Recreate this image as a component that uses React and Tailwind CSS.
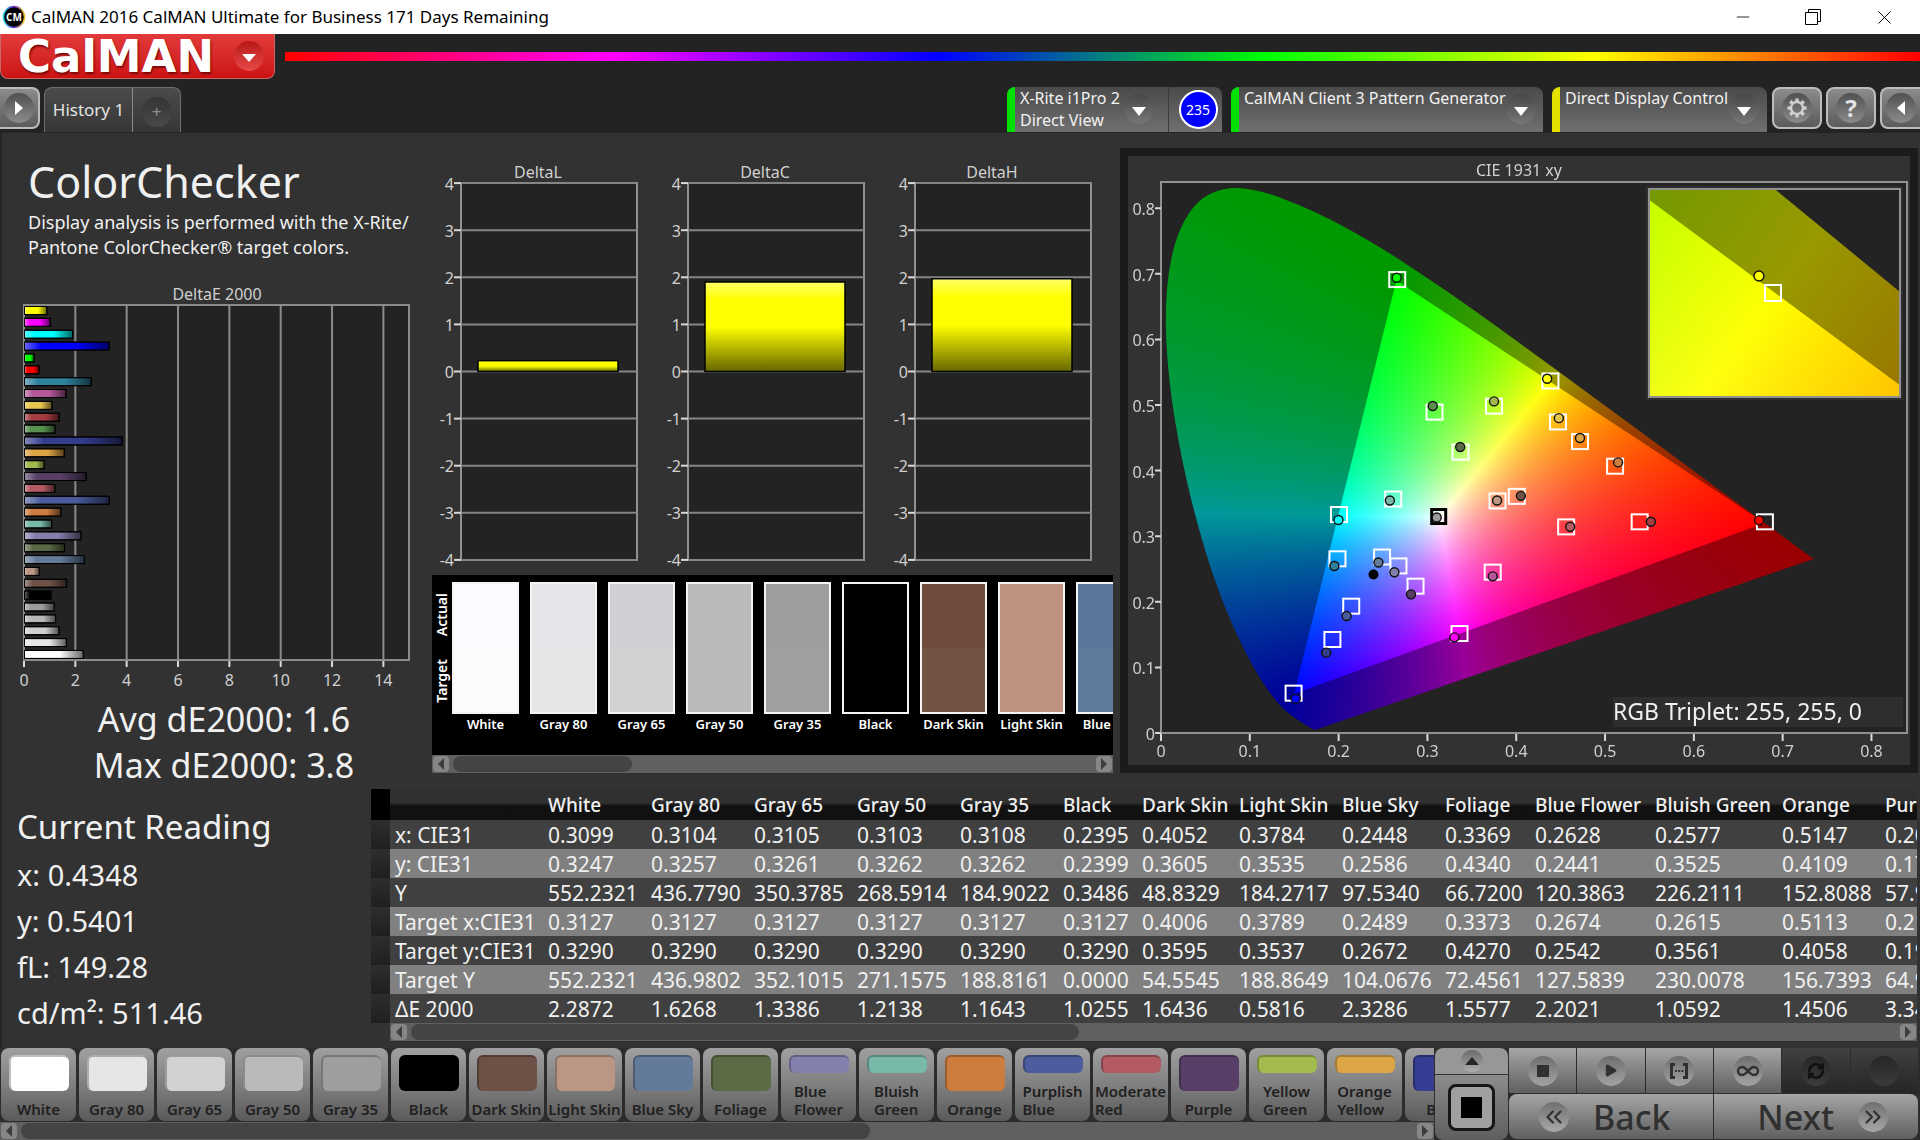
import React, { useEffect, useRef } from 'react';
import {
  ChevronsLeft,
  ChevronsRight,
  Infinity as InfinityIcon,
  Minus,
  Play,
  RefreshCw,
  X,
} from 'lucide-react';

const patches = [
  { name: 'White', color: '#ffffff', actual: '#fbfcff', target: '#fcfcfc' },
  { name: 'Gray 80', color: '#e6e6e6', actual: '#e4e5e9', target: '#e5e5e5' },
  { name: 'Gray 65', color: '#d2d2d2', actual: '#d0cfd3', target: '#d1d1d1' },
  { name: 'Gray 50', color: '#bababa', actual: '#b9babb', target: '#bababa' },
  { name: 'Gray 35', color: '#9e9e9e', actual: '#9d9d9e', target: '#9f9f9f' },
  { name: 'Black', color: '#000000', actual: '#000103', target: '#000000' },
  { name: 'Dark Skin', color: '#6e5146', actual: '#704c3f', target: '#735344' },
  { name: 'Light Skin', color: '#ba9785', actual: '#bf9280', target: '#c0937f' },
  { name: 'Blue Sky', color: '#637a99', actual: '#5a779c', target: '#5d7b9c' },
  { name: 'Foliage', color: '#5b6b45' },
  { name: 'Blue Flower', color: '#8380ad', lines: ['Blue', 'Flower'] },
  { name: 'Bluish Green', color: '#79b9a9', lines: ['Bluish', 'Green'] },
  { name: 'Orange', color: '#cc7c3d' },
  { name: 'Purplish Blue', color: '#4d5c9e', lines: ['Purplish', 'Blue'] },
  { name: 'Moderate Red', color: '#b35a63', lines: ['Moderate', 'Red'] },
  { name: 'Purple', color: '#583f68' },
  { name: 'Yellow Green', color: '#a3ba4e', lines: ['Yellow', 'Green'] },
  { name: 'Orange Yellow', color: '#dda545', lines: ['Orange', 'Yellow'] },
  { name: 'Blue', color: '#363d92' },
];

const deltaE = [
  [0.87, '#ffff00'], [1.0, '#ff00ff'], [1.87, '#00ffff'], [3.3, '#0000ff'], [0.37, '#00ff00'],
  [0.57, '#ff0000'], [2.6, '#2e829e'], [1.62, '#b4589a'], [1.07, '#e6c74d'], [1.35, '#a53c40'],
  [1.19, '#58914f'], [3.8, '#343c8c'], [1.55, '#dca345'], [0.77, '#a2b94f'], [2.4, '#573f66'],
  [1.18, '#b45a64'], [3.3, '#4a5c9c'], [1.42, '#cd7d40'], [1.06, '#78b8a8'], [2.2, '#827fab'],
  [1.56, '#5a6a45'], [2.33, '#637a98'], [0.58, '#bd9886'], [1.64, '#6e5147'], [1.03, '#000000'],
  [1.16, '#9c9c9c'], [1.21, '#b8b8b8'], [1.34, '#d0d0d0'], [1.63, '#e6e6e6'], [2.29, '#ffffff'],
];

const columns = [
  'White', 'Gray 80', 'Gray 65', 'Gray 50', 'Gray 35', 'Black', 'Dark Skin', 'Light Skin',
  'Blue Sky', 'Foliage', 'Blue Flower', 'Bluish Green', 'Orange', 'Purplish Blue',
];

const columnWidths = [
  'w-[19px]', 'w-[153px]', 'w-[103px]', 'w-[103px]', 'w-[103px]', 'w-[103px]', 'w-[103px]', 'w-[79px]',
  'w-[97px]', 'w-[103px]', 'w-[103px]', 'w-[90px]', 'w-[120px]', 'w-[127px]', 'w-[103px]', 'w-[140px]',
];

const rows = [
  ['x: CIE31', '0.3099', '0.3104', '0.3105', '0.3103', '0.3108', '0.2395', '0.4052', '0.3784', '0.2448', '0.3369', '0.2628', '0.2577', '0.5147', '0.2090'],
  ['y: CIE31', '0.3247', '0.3257', '0.3261', '0.3262', '0.3262', '0.2399', '0.3605', '0.3535', '0.2586', '0.4340', '0.2441', '0.3525', '0.4109', '0.1776'],
  ['Y', '552.2321', '436.7790', '350.3785', '268.5914', '184.9022', '0.3486', '48.8329', '184.2717', '97.5340', '66.7200', '120.3863', '226.2111', '152.8088', '57.9204'],
  ['Target x:CIE31', '0.3127', '0.3127', '0.3127', '0.3127', '0.3127', '0.3127', '0.4006', '0.3789', '0.2489', '0.3373', '0.2674', '0.2615', '0.5113', '0.2142'],
  ['Target y:CIE31', '0.3290', '0.3290', '0.3290', '0.3290', '0.3290', '0.3290', '0.3595', '0.3537', '0.2672', '0.4270', '0.2542', '0.3561', '0.4058', '0.1941'],
  ['Target Y', '552.2321', '436.9802', '352.1015', '271.1575', '188.8161', '0.0000', '54.5545', '188.8649', '104.0676', '72.4561', '127.5839', '230.0078', '156.7393', '64.9310'],
  ['ΔE 2000', '2.2872', '1.6268', '1.3386', '1.2138', '1.1643', '1.0255', '1.6436', '0.5816', '2.3286', '1.5577', '2.2021', '1.0592', '1.4506', '3.3402'],
];

// target x, target y, measured x, measured y, measured colour
const ciePoints = [
  [0.266, 0.692, 0.2654, 0.694, '#00ff00'],
  [0.308, 0.49, 0.306, 0.4985, '#58914f'],
  [0.375, 0.499, 0.375, 0.5055, '#a2b94f'],
  [0.3373, 0.429, 0.3369, 0.436, '#5a6a45'],
  [0.4385, 0.5375, 0.4348, 0.5401, '#ffff00'],
  [0.447, 0.475, 0.448, 0.48, '#e6c74d'],
  [0.4718, 0.445, 0.4718, 0.4497, '#dca345'],
  [0.5113, 0.4075, 0.5147, 0.4125, '#cd7d40'],
  [0.2615, 0.3575, 0.2577, 0.3545, '#78b8a8'],
  [0.2004, 0.3338, 0.1998, 0.3247, '#00ffff'],
  [0.3789, 0.3545, 0.3784, 0.3545, '#bd9886'],
  [0.4006, 0.3615, 0.4052, 0.3615, '#6e5147'],
  [0.4562, 0.315, 0.4608, 0.3145, '#b45a64'],
  [0.539, 0.3227, 0.5516, 0.3221, '#a53c40'],
  [0.68, 0.3227, 0.6735, 0.3242, '#ff0000'],
  [0.1987, 0.2663, 0.1952, 0.2546, '#2e829e'],
  [0.2489, 0.269, 0.2448, 0.26, '#637a98'],
  [0.2674, 0.2555, 0.2628, 0.245, '#827fab'],
  [0.2866, 0.2246, 0.2815, 0.2114, '#573f66'],
  [0.3735, 0.246, 0.3735, 0.2388, '#b4589a'],
  [0.2142, 0.1941, 0.209, 0.1783, '#4a5c9c'],
  [0.193, 0.1433, 0.186, 0.1225, '#343c8c'],
  [0.3361, 0.1524, 0.3304, 0.1458, '#ff00ff'],
  [0.1493, 0.0615, 0.1516, 0.0523, '#0000ff'],
];

const locus = [
  [0.1741, 0.005], [0.1714, 0.0051], [0.1644, 0.0109], [0.1566, 0.0177], [0.144, 0.0297],
  [0.1355, 0.0399], [0.1241, 0.0578], [0.1096, 0.0868], [0.0913, 0.1327], [0.0687, 0.2007],
  [0.0454, 0.295], [0.0235, 0.4127], [0.0082, 0.5384], [0.0039, 0.6548], [0.0139, 0.7502],
  [0.0389, 0.812], [0.0743, 0.8338], [0.1142, 0.8262], [0.1547, 0.8059], [0.1929, 0.7816],
  [0.2296, 0.7543], [0.2658, 0.7243], [0.3016, 0.6923], [0.3373, 0.6589], [0.3731, 0.6245],
  [0.4441, 0.5547], [0.5125, 0.4866], [0.5752, 0.4242], [0.627, 0.3725], [0.6658, 0.334],
  [0.6915, 0.3083], [0.719, 0.2809], [0.7347, 0.2653],
];

const gamut = [[0.68, 0.32], [0.265, 0.69], [0.15, 0.06]];

// Plot areas inside the 782 x 609 chart
const mainPlot = { left: 33, top: 26, width: 746, height: 551, x0: 0, y0: 0, span: 0.84 };
const zoomPlot = { left: 521, top: 33, width: 251, height: 208, x0: 0.4126, y0: 0.511, span: 0.05 };

const toPx = (plot, x, y) => [
  plot.left + ((x - plot.x0) / plot.span) * plot.width,
  plot.top + plot.height - ((y - plot.y0) / plot.span) * plot.height,
];

// Chromaticity to display RGB, scaled so the largest channel is full
const chromaToRgb = (x, y) => {
  const X = x / Math.max(y, 0.001);
  const Z = (1 - x - y) / Math.max(y, 0.001);
  const rgb = [
    2.4935 * X - 0.9314 - 0.4027 * Z,
    -0.8295 * X + 1.7627 + 0.0236 * Z,
    0.0358 * X - 0.0762 + 0.9569 * Z,
  ].map((v) => Math.max(v, 0));
  const max = Math.max(...rgb, 0.0001);
  return rgb.map((v) => (v / max) * 255);
};

const drawPlot = (ctx, plot) => {
  const { left, top, width, height } = plot;
  const layer = (gain) => {
    const canvas = document.createElement('canvas');
    canvas.width = width;
    canvas.height = height;
    const layerCtx = canvas.getContext('2d');
    const image = layerCtx.createImageData(width, height);
    for (let j = 0; j < height; j++) {
      for (let i = 0; i < width; i++) {
        const x = plot.x0 + (i / width) * plot.span;
        const y = plot.y0 + ((height - j) / height) * plot.span;
        const [r, g, b] = chromaToRgb(x, y);
        const k = (j * width + i) * 4;
        image.data[k] = r * gain;
        image.data[k + 1] = g * gain;
        image.data[k + 2] = b * gain;
        image.data[k + 3] = 255;
      }
    }
    layerCtx.putImageData(image, 0, 0);
    return canvas;
  };

  ctx.save();
  ctx.beginPath();
  ctx.rect(left, top, width, height);
  ctx.clip();
  ctx.fillStyle = '#232323';
  ctx.fillRect(left, top, width, height);

  const pts = locus.map(([x, y]) => toPx(plot, x, y));
  ctx.beginPath();
  ctx.moveTo(...pts[0]);
  for (let i = 1; i < pts.length - 1; i++) {
    const [ax, ay] = pts[i];
    const [bx, by] = pts[i + 1];
    ctx.quadraticCurveTo(ax, ay, (ax + bx) / 2, (ay + by) / 2);
  }
  ctx.lineTo(...pts[pts.length - 1]);
  ctx.closePath();
  ctx.clip();
  ctx.drawImage(layer(0.6), left, top);

  ctx.beginPath();
  gamut.forEach(([x, y]) => ctx.lineTo(...toPx(plot, x, y)));
  ctx.closePath();
  ctx.clip();
  ctx.drawImage(layer(1), left, top);
  ctx.restore();
};

const CieChart = () => {
  const canvasRef = useRef(null);

  useEffect(() => {
    const ctx = canvasRef.current.getContext('2d');
    drawPlot(ctx, mainPlot);
    ctx.fillStyle = '#2e2e2e';
    ctx.fillRect(518, 30, 257, 214);
    drawPlot(ctx, zoomPlot);
  }, []);

  const ticks = [0, 0.1, 0.2, 0.3, 0.4, 0.5, 0.6, 0.7, 0.8];
  const [wx, wy] = toPx(mainPlot, 0.3127, 0.33);
  const [tx, ty] = toPx(zoomPlot, 0.4373, 0.536);
  const [ax, ay] = toPx(zoomPlot, 0.4345, 0.5401);

  return (
    <div className="relative bg-[#323232]">
      <canvas ref={canvasRef} width={782} height={609} className="block w-full" />
      <svg viewBox="0 0 782 609" className="absolute inset-0 h-full w-full" role="img" aria-label="CIE 1931 xy chart">
        <text x="391" y="20" fontSize="16" textAnchor="middle" fill="#d0d0d0">CIE 1931 xy</text>
        <rect x="33" y="26" width="746" height="551" fill="none" stroke="#919191" strokeWidth="2" />
        {ticks.map((t) => {
          const [px] = toPx(mainPlot, t, 0);
          const [, py] = toPx(mainPlot, 0, t);
          return (
            <g key={t} fill="#d0d0d0" fontSize="16">
              <path d={`M${px} 578v7M27 ${py}h6`} stroke="#d8d8d8" strokeWidth="2" />
              <text x={px} y="601" textAnchor="middle">{t}</text>
              <text x="27" y={py + 7} textAnchor="end">{t}</text>
            </g>
          );
        })}
        {ciePoints.map(([x, y]) => {
          const [px, py] = toPx(mainPlot, x, y);
          return <rect key={`${x}-${y}`} x={px - 8} y={py - 7} width="16" height="15" fill="none" stroke="#fff" strokeWidth="2" />;
        })}
        {ciePoints.map(([, , x, y, color]) => {
          const [px, py] = toPx(mainPlot, x, y);
          return <circle key={color} cx={px} cy={py} r="4.5" fill={color} stroke="#111" strokeWidth="1.4" />;
        })}
        <circle cx="245.5" cy="418.5" r="5" fill="#000" />
        <rect x={wx - 7} y={wy - 7} width="14" height="14" fill="none" stroke="#000" strokeWidth="3" />
        <circle cx={wx - 2} cy={wy + 1} r="4.5" fill="#9c9c9c" stroke="#111" strokeWidth="1.4" />

        <rect x="521" y="33" width="251" height="208" fill="none" stroke="#919191" strokeWidth="2" />
        <rect x={tx - 8} y={ty - 8} width="16" height="16" fill="none" stroke="#fff" strokeWidth="2" />
        <circle cx={ax} cy={ay} r="5" fill="#ffff00" stroke="#111" strokeWidth="1.4" />
        <rect x="485" y="541" width="290" height="30" fill="#2e2e2e" />
        <text x="485" y="564" fontSize="23" fill="#f0f0f0">RGB Triplet: 255, 255, 0</text>
      </svg>
    </div>
  );
};

const DeltaEChart = () => (
  <svg viewBox="0 0 400 417" className="block w-full" role="img" aria-label="DeltaE 2000 chart">
    <defs>
      <linearGradient id="sheen">
        <stop offset="0" stopColor="#fff" stopOpacity="0.4" />
        <stop offset="0.2" stopColor="#fff" stopOpacity="0" />
        <stop offset="0.6" stopColor="#000" stopOpacity="0" />
        <stop offset="1" stopColor="#000" stopOpacity="0.6" />
      </linearGradient>
    </defs>
    <text x="201" y="21" fontSize="16" textAnchor="middle" fill="#d0d0d0">DeltaE 2000</text>
    <rect x="8" y="26" width="385" height="355" fill="#232323" stroke="#8b8b8b" strokeWidth="2" />
    {[0, 2, 4, 6, 8, 10, 12, 14].map((t) => (
      <g key={t}>
        <path d={`M${8 + t * 25.67} 26v355`} stroke="#8b8b8b" strokeWidth="2" />
        <path d={`M${8 + t * 25.67} 382v6`} stroke="#d8d8d8" strokeWidth="2" />
        <text x={8 + t * 25.67} y="407" fontSize="16" textAnchor="middle" fill="#d0d0d0">{t}</text>
      </g>
    ))}
    {deltaE.map(([value, color], i) => (
      <g key={color} stroke="#000" strokeWidth="1">
        <rect x="8.5" y={27.5 + i * 11.86} width={value * 25.67} height="8" fill={color} />
        <rect x="8.5" y={27.5 + i * 11.86} width={value * 25.67} height="8" fill="url(#sheen)" />
      </g>
    ))}
  </svg>
);

const DeltaChart = ({ title, value }) => (
  <svg viewBox="0 0 227 418" className="block w-full" role="img" aria-label={`${title} chart`}>
    <defs>
      <linearGradient id="yellow-bar" x1="0" y1="0" x2="0" y2="1">
        <stop offset="0" stopColor="#ffff66" />
        <stop offset="0.2" stopColor="#ffff00" />
        <stop offset="0.5" stopColor="#ffff00" />
        <stop offset="1" stopColor="#666600" />
      </linearGradient>
    </defs>
    <text x="106" y="21" fontSize="16" textAnchor="middle" fill="#d0d0d0">{title}</text>
    <rect x="29" y="26" width="176" height="377" fill="#232323" stroke="#919191" strokeWidth="2" />
    {[4, 3, 2, 1, 0, -1, -2, -3, -4].map((t) => (
      <g key={t}>
        <path d={`M29 ${214.5 - t * 47.1}h176`} stroke="#858585" strokeWidth="2" />
        <path d={`M22 ${214.5 - t * 47.1}h7`} stroke="#d8d8d8" strokeWidth="2" />
        <text x="22" y={221 - t * 47.1} fontSize="16" textAnchor="end" fill="#d0d0d0">{t}</text>
      </g>
    ))}
    <rect x="46" y={214.5 - value * 47.1} width="140" height={value * 47.1} fill="url(#yellow-bar)" stroke="#000" strokeWidth="1.5" />
  </svg>
);

const ScrollBar = ({ label, thumbClass }) => (
  <div className="flex h-[18px] items-center gap-1 bg-[#606060] px-px" role="group" aria-label={label}>
    <button aria-label="Scroll left" className="flex h-4 w-4 items-center justify-center rounded-sm bg-[#868686]">
      <svg viewBox="0 0 8 12" className="h-3 w-2"><path d="M7 0v12L1 6z" fill="#3c3c3c" /></svg>
    </button>
    <div className="h-4 flex-1">
      <div className={`h-4 rounded-lg bg-[#444444] ${thumbClass}`} />
    </div>
    <button aria-label="Scroll right" className="flex h-4 w-4 items-center justify-center rounded-sm bg-[#868686]">
      <svg viewBox="0 0 8 12" className="h-3 w-2"><path d="M1 0v12l6-6z" fill="#3c3c3c" /></svg>
    </button>
  </div>
);

const DropCircle = () => (
  <span className="flex h-[30px] w-[30px] shrink-0 items-center justify-center rounded-full bg-linear-to-b from-[#484848] to-[#777777]">
    <svg viewBox="0 0 14 9" className="mt-1 h-[9px] w-[14px]"><path d="M0 0h14L7 9z" fill="#fff" /></svg>
  </span>
);

const SourceTab = ({ lines, strip, widthClass, dropClass, children }) => (
  <div className={`flex h-[45px] overflow-hidden rounded-t-lg bg-linear-to-b from-[#4a4a4a] to-[#707070] ${widthClass}`}>
    <button className="flex flex-1 text-left">
      <span className={`h-full w-2 shrink-0 ${strip}`} />
      <span className="flex-1 pl-[5px] text-[16px] leading-[22px] whitespace-nowrap text-[#f2f2f2]">
        {lines.map((line) => (
          <span key={line} className="block">{line}</span>
        ))}
      </span>
      <span className={`mt-[7px] ${dropClass}`}><DropCircle /></span>
    </button>
    {children}
  </div>
);

const ToolButton = ({ label, className, children }) => (
  <button aria-label={label} className={`flex h-[42px] items-center justify-center border-2 border-[#bcbcbc] bg-linear-to-b from-[#8c8c8c] to-[#5c5c5c] ${className}`}>
    <span className="flex h-[30px] w-[30px] items-center justify-center rounded-full bg-linear-to-b from-[#505050] to-[#8c8c8c]">
      {children}
    </span>
  </button>
);

const GearIcon = () => (
  <svg viewBox="0 0 24 24" className="h-6 w-6" fill="none" stroke="#d0d0d0">
    <circle cx="12" cy="12" r="6" strokeWidth="2.4" />
    {[0, 45, 90, 135, 180, 225, 270, 315].map((a) => (
      <path key={a} d="M12 2.5v3" strokeWidth="3.4" transform={`rotate(${a} 12 12)`} />
    ))}
  </svg>
);

const TitleBar = () => (
  <div className="flex h-[34px] items-center bg-white text-black">
    <svg viewBox="0 0 24 24" className="ml-[2px] h-6 w-6" aria-hidden="true">
      <defs>
        <linearGradient id="ring">
          <stop offset="0" stopColor="#18d0d8" />
          <stop offset="0.5" stopColor="#7030e0" />
          <stop offset="1" stopColor="#e8c020" />
        </linearGradient>
      </defs>
      <circle cx="12" cy="12" r="10.5" fill="#000" stroke="url(#ring)" strokeWidth="1.5" />
      <text x="12" y="16" fontSize="10" fontWeight="700" textAnchor="middle" fill="#fff">CM</text>
    </svg>
    <h1 className="ml-[5px] flex-1 text-[17px]">CalMAN 2016 CalMAN Ultimate for Business 171 Days Remaining</h1>
    <button aria-label="Minimize" className="flex h-full w-[70px] items-center justify-center"><Minus size={20} strokeWidth={1} /></button>
    <button aria-label="Restore" className="flex h-full w-[70px] items-center justify-center">
      <svg viewBox="0 0 16 16" className="h-4 w-4" fill="none" stroke="#000"><path d="M.5 3.500h12v12H.5zM3.500 3.500v-3h12v12h-3" /></svg>
    </button>
    <button aria-label="Close" className="flex h-full w-[72px] items-center justify-center"><X size={23} strokeWidth={1} /></button>
  </div>
);

const Header = () => (
  <header className="bg-[#232323]">
    <div className="flex gap-[10px]">
      <button className="flex h-[45px] w-[275px] items-center justify-between rounded-b-lg border border-t-0 border-[#c46a6a] bg-linear-to-b from-[#e23a3a] to-[#cc1111] pr-[10px] pl-[17px]">
        <span className="font-['DejaVu_Sans'] text-[45px] leading-none font-bold text-white [text-shadow:1px_2px_2px_#7a0808]">CalMAN</span>
        <span className="flex h-[30px] w-[30px] items-center justify-center rounded-full bg-linear-to-b from-[#b81616] to-[#e84848]">
          <svg viewBox="0 0 14 8" className="mt-1 h-2 w-[14px]"><path d="M0 0h14L7 8z" fill="#fff" /></svg>
        </span>
      </button>
      <div className="mt-[18px] h-[9px] flex-1 bg-[linear-gradient(90deg,#ff0000_0%,#ff00ff_20%,#0000ff_40%,#00ff00_60%,#ffff00_80%,#ff0000_100%)]" />
    </div>
    <div className="flex justify-between pt-2">
      <div className="flex gap-1">
        <ToolButton label="Expand panel" className="w-10 rounded-r-lg border-l-0">
          <svg viewBox="0 0 8 14" className="h-[14px] w-2"><path d="M0 0v14l8-7z" fill="#fff" /></svg>
        </ToolButton>
        <div className="flex h-[45px] w-[137px] overflow-hidden rounded-t-lg border border-b-0 border-[#6e6e6e] bg-linear-to-b from-[#4b4b4b] to-[#363636]">
          <button className="w-[88px] border-r border-[#8a8a8a] text-[17px] text-[#e4e4e4]">History 1</button>
          <button aria-label="Add tab" className="flex flex-1 items-center justify-center pt-1">
            <span className="flex h-[30px] w-[30px] items-center justify-center rounded-full bg-linear-to-b from-[#343434] to-[#4a4a4a] text-[17px] text-[#8e8e8e]">+</span>
          </button>
        </div>
      </div>
      <div className="flex">
        <SourceTab lines={['X-Rite i1Pro 2', 'Direct View']} strip="bg-[#00e000]" widthClass="mr-[9px] w-[215px]" dropClass="mr-[14px]">
          <div className="flex w-[54px] items-center justify-center border-l border-[#3a3a3a] pl-[5px]">
            <span className="flex h-[39px] w-[39px] items-center justify-center rounded-full border-2 border-white bg-[#0000ff] text-[14px] text-white">235</span>
          </div>
        </SourceTab>
        <SourceTab lines={['CalMAN Client 3 Pattern Generator']} strip="bg-[#00e000]" widthClass="mr-[9px] w-[312px]" dropClass="mr-2" />
        <SourceTab lines={['Direct Display Control']} strip="bg-[#e4e000]" widthClass="mr-[5px] w-[215px]" dropClass="mr-2" />
        <div className="flex gap-1">
          <ToolButton label="Settings" className="w-[50px] rounded-lg"><GearIcon /></ToolButton>
          <ToolButton label="Help" className="w-[50px] rounded-lg">
            <span className="text-[24px] leading-none font-bold text-[#e4e4e4]">?</span>
          </ToolButton>
          <ToolButton label="Collapse panel" className="w-10 rounded-l-lg border-r-0">
            <svg viewBox="0 0 8 14" className="h-[14px] w-2"><path d="M8 0v14L0 7z" fill="#fff" /></svg>
          </ToolButton>
        </div>
      </div>
    </div>
  </header>
);

const PatchComparison = () => (
  <section>
    <div className="flex overflow-hidden bg-black pt-[7px] pb-5">
      <div className="flex h-[132px] w-5 shrink-0 flex-col items-center justify-around text-[14px] leading-5 font-semibold text-white">
        <span className="rotate-180 [writing-mode:vertical-rl]">Actual</span>
        <span className="rotate-180 [writing-mode:vertical-rl]">Target</span>
      </div>
      <ul className="flex min-w-0 flex-1 gap-[11px] overflow-hidden">
        {patches.filter((p) => p.actual).map((p) => (
          <li key={p.name} className="w-[67px] shrink-0">
            <div className="flex h-[132px] flex-col border-2 border-[#f4f4f4]">
              <div className="flex-1" style={{ backgroundColor: p.actual }} />
              <div className="flex-1" style={{ backgroundColor: p.target }} />
            </div>
            <p className="flex justify-center text-[13px] leading-[21px] font-semibold whitespace-nowrap text-white">{p.name}</p>
          </li>
        ))}
      </ul>
    </div>
    <ScrollBar label="Patch comparison scroll" thumbClass="w-[28%]" />
  </section>
);

const DataTable = () => (
  <section className="min-w-0 overflow-hidden">
    <table className="w-[1649px] table-fixed border-collapse text-left text-[21px] leading-[28px] text-[#f0f0f0]">
      <colgroup>
        {columnWidths.map((width, i) => (
          <col key={i} className={width} />
        ))}
      </colgroup>
      <thead>
        <tr className="h-[31px] bg-linear-to-b from-[#303030] from-45% to-[#111111] to-55% text-[19px]">
          <td className="bg-black" />
          <td />
          {columns.map((name) => (
            <th key={name} scope="col" className="p-0 pl-[5px] font-medium whitespace-nowrap">{name}</th>
          ))}
        </tr>
      </thead>
      <tbody>
        {rows.map(([label, ...values], i) => (
          <tr key={label} className={`h-[29px] ${i % 2 ? 'bg-[#808080]' : 'bg-[#404040]'}`}>
            <td className="bg-linear-to-b from-[#2e2e2e] to-[#1f1f1f]" />
            <th scope="row" className="p-0 pl-[5px] font-normal whitespace-nowrap">{label}</th>
            {values.map((value, j) => (
              <td key={j} className="p-0 pl-[5px]">{value}</td>
            ))}
          </tr>
        ))}
      </tbody>
    </table>
    <div className="ml-[19px]">
      <ScrollBar label="Table scroll" thumbClass="w-[45%]" />
    </div>
  </section>
);

const PatchButton = ({ patch }) => (
  <button className="flex h-[73px] w-[75px] shrink-0 flex-col items-center justify-between rounded-lg bg-linear-to-b from-[#a0a0a0] via-[#808080] to-[#5a5a5a] pt-[7px] pb-[3px]">
    <span
      className={`w-[60px] rounded-md border-t-2 border-l-2 border-black/25 ${patch.lines ? 'h-[18px]' : 'h-9'}`}
      style={{ backgroundColor: patch.color }}
    />
    <span className="text-left text-[15px] leading-[18px] font-semibold whitespace-nowrap text-[#202020]">
      {(patch.lines || [patch.name]).map((line) => (
        <span key={line} className="block">{line}</span>
      ))}
    </span>
  </button>
);

const TransportButton = ({ label, disabled, children }) => (
  <button
    aria-label={label}
    disabled={disabled}
    className={`flex h-[45px] flex-1 items-center justify-center bg-linear-to-b text-[#303030] ${disabled ? 'from-[#404040] to-[#262626]' : 'from-[#a6a6a6] to-[#606060]'}`}
  >
    <span className={`flex h-[30px] w-[30px] items-center justify-center rounded-full bg-linear-to-b ${disabled ? 'from-[#262626] to-[#3c3c3c] text-[#101010]' : 'from-[#6e6e6e] to-[#a4a4a4]'}`}>
      {children}
    </span>
  </button>
);

const Footer = () => (
  <footer className="flex bg-[#2c2c2c]">
    <div className="min-w-0 flex-1 overflow-hidden">
      <div className="flex gap-[3px] overflow-hidden pb-px pl-px">
        {patches.map((patch) => (
          <PatchButton key={patch.name} patch={patch} />
        ))}
      </div>
      <ScrollBar label="Pattern scroll" thumbClass="w-[61%]" />
    </div>
    <div className="ml-px flex w-[73px] flex-col overflow-hidden rounded-lg">
      <button aria-label="More patterns" className="flex h-[27px] items-center justify-center border-b border-[#333333] bg-[#979797]">
        <span className="flex h-[22px] w-[22px] items-center justify-center rounded-full bg-linear-to-b from-[#6a6a6a] to-[#b0b0b0]">
          <svg viewBox="0 0 14 8" className="h-2 w-[14px]"><path d="M0 8h14L7 0z" fill="#262626" /></svg>
        </span>
      </button>
      <button aria-label="Window pattern" className="flex h-[65px] items-center justify-center bg-linear-to-b from-[#8c8c8c] to-[#5e5e5e]">
        <span className="flex h-[47px] w-[47px] items-center justify-center rounded-lg border-[3px] border-[#161616] bg-[#a0a0a0]">
          <span className="h-[21px] w-[21px] bg-black" />
        </span>
      </button>
    </div>
    <div className="mr-[2px] ml-px w-[409px]">
      <div className="flex gap-px">
        <TransportButton label="Stop"><span className="h-3 w-3 bg-[#303030]" /></TransportButton>
        <TransportButton label="Play"><Play size={15} fill="currentColor" strokeWidth={1} /></TransportButton>
        <TransportButton label="Read series">
          <svg viewBox="0 0 20 16" className="h-4 w-5" fill="none" stroke="currentColor" strokeWidth="3">
            <path d="M6 1.500H2.500v13H6M14 1.500h3.500v13H14" />
            <path d="M6 8h2M9.200 8h2M12.400 8h2" strokeWidth="2" />
          </svg>
        </TransportButton>
        <TransportButton label="Read continuous"><InfinityIcon size={24} strokeWidth={2.4} /></TransportButton>
        <TransportButton label="Refresh" disabled><RefreshCw size={18} strokeWidth={3.4} /></TransportButton>
        <TransportButton label="Record" disabled />
      </div>
      <div className="mt-px flex gap-px overflow-hidden rounded-lg text-[34px] leading-none font-medium text-[#303030]">
        <button className="flex h-[45px] flex-1 items-center gap-6 bg-linear-to-b from-[#a6a6a6] to-[#606060] pl-[30px]">
          <span className="flex h-[30px] w-[30px] items-center justify-center rounded-full bg-linear-to-b from-[#707070] to-[#a8a8a8]"><ChevronsLeft size={26} /></span>
          Back
        </button>
        <button className="flex h-[45px] flex-1 items-center justify-end gap-6 bg-linear-to-b from-[#a6a6a6] to-[#606060] pr-[30px]">
          Next
          <span className="flex h-[30px] w-[30px] items-center justify-center rounded-full bg-linear-to-b from-[#707070] to-[#a8a8a8]"><ChevronsRight size={26} /></span>
        </button>
      </div>
    </div>
  </footer>
);

const App = () => (
  <div className="flex min-h-screen flex-col overflow-hidden bg-[#232323] font-['Noto_Sans','Open_Sans',sans-serif]">
    <TitleBar />
    <Header />
    <main className="flex-1 border-t border-l-2 border-[#262626] bg-[#323232] text-[#f0f0f0]">
      <div className="grid grid-cols-[430fr_688fr_800fr]">
        <section className="min-w-0 pl-[14px]">
          <div className="pt-[21px] pl-3">
            <h2 className="text-[43px] leading-[56px]">ColorChecker</h2>
            <p className="text-[18px] leading-[25px] whitespace-nowrap">
              Display analysis is performed with the X-Rite/<br />
              Pantone ColorChecker® target colors.
            </p>
          </div>
          <div className="mt-[19px] mr-[16px]"><DeltaEChart /></div>
          <div className="text-center text-[34px] leading-[46px]">
            <p>Avg dE2000: 1.6</p>
            <p>Max dE2000: 3.8</p>
          </div>
        </section>
        <section className="min-w-0 pt-6 pr-[7px]">
          <div className="grid grid-cols-3">
            <DeltaChart title="DeltaL" value={0.23} />
            <DeltaChart title="DeltaC" value={1.9} />
            <DeltaChart title="DeltaH" value={1.97} />
          </div>
          <PatchComparison />
        </section>
        <section className="min-w-0 pt-[15px] pr-[2px]">
          <div className="border-8 border-[#1b1b1b]"><CieChart /></div>
        </section>
      </div>
      <div className="grid grid-cols-[369px_1fr] pt-px pr-[3px] pb-[4px]">
        <section className="pt-[15px] pl-[15px] text-[29px] leading-[46px]">
          <h2 className="pb-[2px] text-[33px]">Current Reading</h2>
          <p>x: 0.4348</p>
          <p>y: 0.5401</p>
          <p>fL: 149.28</p>
          <p>cd/m²: 511.46</p>
        </section>
        <DataTable />
      </div>
    </main>
    <Footer />
  </div>
);

export default App;
